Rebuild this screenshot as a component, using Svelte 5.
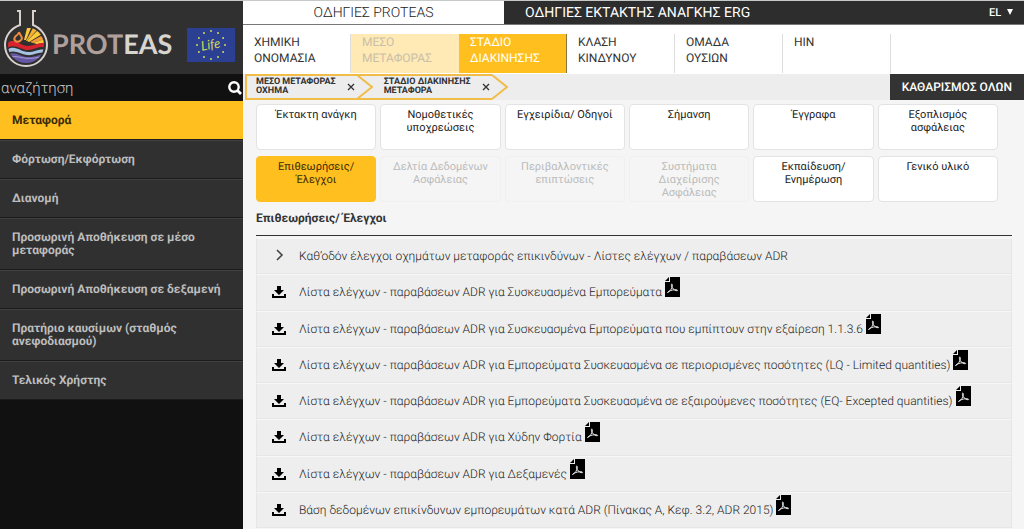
<script lang="ts">
  interface NavItem {
    label: string;
    state?: 'done' | 'active';
  }

  interface Tile {
    label: string;
    disabled?: boolean;
  }

  let search = $state('');
  let language = $state('EL');
  let activeStage = $state('Μεταφορά');
  let activeTile = $state('Επιθεωρήσεις/ Έλεγχοι');

  const stages = [
    'Μεταφορά',
    'Φόρτωση/Εκφόρτωση',
    'Διανομή',
    'Προσωρινή Αποθήκευση σε μέσο μεταφοράς',
    'Προσωρινή Αποθήκευση σε δεξαμενή',
    'Πρατήριο καυσίμων (σταθμός ανεφοδιασμού)',
    'Τελικός Χρήστης'
  ];

  const navItems: NavItem[] = [
    { label: 'ΧΗΜΙΚΗ ΟΝΟΜΑΣΙΑ' },
    { label: 'ΜΕΣΟ ΜΕΤΑΦΟΡΑΣ', state: 'done' },
    { label: 'ΣΤΑΔΙΟ ΔΙΑΚΙΝΗΣΗΣ', state: 'active' },
    { label: 'ΚΛΑΣΗ ΚΙΝΔΥΝΟΥ' },
    { label: 'ΟΜΑΔΑ ΟΥΣΙΩΝ' },
    { label: 'HIN' }
  ];

  let filters = $state([
    { name: 'ΜΕΣΟ ΜΕΤΑΦΟΡΑΣ', value: 'ΟΧΗΜΑ' },
    { name: 'ΣΤΑΔΙΟ ΔΙΑΚΙΝΗΣΗΣ', value: 'ΜΕΤΑΦΟΡΑ' }
  ]);

  const tiles: Tile[] = [
    { label: 'Έκτακτη ανάγκη' },
    { label: 'Νομοθετικές υποχρεώσεις' },
    { label: 'Εγχειρίδια/ Οδηγοί' },
    { label: 'Σήμανση' },
    { label: 'Έγγραφα' },
    { label: 'Εξοπλισμός ασφάλειας' },
    { label: 'Επιθεωρήσεις/ Έλεγχοι' },
    { label: 'Δελτία Δεδομένων Ασφάλειας', disabled: true },
    { label: 'Περιβαλλοντικές επιπτώσεις', disabled: true },
    { label: 'Συστήματα Διαχείρισης Ασφάλειας', disabled: true },
    { label: 'Εκπαίδευση/ Ενημέρωση' },
    { label: 'Γενικό υλικό' }
  ];

  const documents = [
    'Λίστα ελέγχων - παραβάσεων ADR για Συσκευασμένα Εμπορεύματα',
    'Λίστα ελέγχων - παραβάσεων ADR για Συσκευασμένα Εμπορεύματα που εμπίπτουν στην εξαίρεση 1.1.3.6',
    'Λίστα ελέγχων - παραβάσεων ADR για Εμπορεύματα Συσκευασμένα σε περιορισμένες ποσότητες (LQ - Limited quantities)',
    'Λίστα ελέγχων - παραβάσεων ADR για Εμπορεύματα Συσκευασμένα σε εξαιρούμενες ποσότητες (EQ- Excepted quantities)',
    'Λίστα ελέγχων - παραβάσεων ADR για Χύδην Φορτία',
    'Λίστα ελέγχων - παραβάσεων ADR για Δεξαμενές',
    'Βάση δεδομένων επικίνδυνων εμπορευμάτων κατά ADR (Πίνακας Α, Κεφ. 3.2, ADR 2015)'
  ];

  const stars = Array.from({ length: 12 }, (_, i) => {
    const angle = (i * Math.PI) / 6;
    return { x: 24 + 14 * Math.sin(angle), y: 17 - 14 * Math.cos(angle) };
  });

  function removeFilter(name: string) {
    filters = filters.filter((f) => f.name !== name);
  }
</script>

<div class="page">
  <aside class="sidebar">
    <a class="brand" href="#home" aria-label="PROTEAS">
      <svg class="flask" viewBox="0 0 46 60" width="46" height="60" aria-hidden="true">
        <defs>
          <clipPath id="bowl"><circle cx="23" cy="37" r="18" /></clipPath>
        </defs>
        <g clip-path="url(#bowl)">
          <path d="M21 32 24 20 28 20 23 32Z" fill="#f8c73c" />
          <path d="M23 33 30 20 34 22 24 33Z" fill="#f8b233" />
          <path d="M24 33 35 22 39 26 26 34Z" fill="#fbc93a" />
          <path d="M27 34 38 28 42 31 30 35Z" fill="#f29a38" />
          <path d="M30 35 42 31 43 35 34 36Z" fill="#fbc93a" />
          <path d="M4 35C12 29 17 38 25 38S36 33 43 36V40C35 37 32 42 25 42S12 35 4 40Z" fill="#d8232f" />
          <path d="M4 42C12 36 17 44 25 44S36 40 43 42V45C35 43 31 48 24 47S12 41 4 45Z" fill="#a7c3e2" />
          <path d="M4 47C12 42 17 49 25 49S35 47 43 45V57H4Z" fill="#6658a5" />
          <path d="M8 49C17 47 20 53 37 49" fill="none" stroke="#a99ed0" stroke-width="1" />
        </g>
        <path d="M16 24C18 29 21 30 17 33C13 35 10 32 12 29C13 27 16 27 16 24Z" fill="none" stroke="#f08a3c" stroke-width="2" />
        <path
          d="M14 3H17V17C8 20 2 28 2 37A21 21 0 0 0 44 37C44 28 38 20 30 17V3H33"
          fill="none"
          stroke="#d8d2cf"
          stroke-width="2"
        />
      </svg>
      <span class="wordmark"><span>PROT</span>EAS</span>
      <svg class="life" viewBox="0 0 48 34" width="48" height="34" aria-hidden="true">
        <rect width="48" height="34" fill="#2b3f93" />
        {#each stars as star}
          <circle cx={star.x} cy={star.y} r="1" fill="#d5d957" />
        {/each}
        <text x="14" y="21" transform="rotate(-10 24 17)">Life</text>
      </svg>
    </a>
    <form class="search" onsubmit={(e) => e.preventDefault()}>
      <input type="text" aria-label="αναζήτηση" placeholder="αναζήτηση" bind:value={search} />
      <button type="submit" aria-label="Search">
        <svg viewBox="0 0 14 14" width="14" height="14">
          <circle cx="6" cy="6" r="4.7" fill="none" stroke="#fff" stroke-width="2.4" />
          <path d="M9 9 13 13" stroke="#fff" stroke-width="2.8" />
        </svg>
      </button>
    </form>
    <nav class="stages">
      {#each stages as stage}
        <button
          type="button"
          class:active={stage === activeStage}
          onclick={() => (activeStage = stage)}
        >
          {stage}
        </button>
      {/each}
    </nav>
  </aside>

  <main>
    <header class="topbar">
      <a class="tab current" href="#proteas">ΟΔΗΓΙΕΣ PROTEAS</a>
      <a class="tab" href="#erg">ΟΔΗΓΙΕΣ ΕΚΤΑΚΤΗΣ ΑΝΑΓΚΗΣ ERG</a>
      <label class="language">
        <select aria-label="Language" bind:value={language}>
          <option>EL</option>
          <option>EN</option>
        </select>
        <svg viewBox="0 0 6 6" width="6" height="6" aria-hidden="true">
          <path d="M0 0H6L3 6Z" fill="#fff" />
        </svg>
      </label>
    </header>

    <nav class="criteria">
      {#each navItems as item}
        <a href="#criteria" class={item.state}>{item.label}</a>
      {/each}
    </nav>

    <div class="filters">
      {#each filters as filter (filter.name)}
        <div class="chip">
          <span>{filter.name}<br />{filter.value}</span>
          <button type="button" aria-label="Remove {filter.name}" onclick={() => removeFilter(filter.name)}>
            <svg viewBox="0 0 8 8" width="8" height="8">
              <path d="M1 1 7 7M7 1 1 7" stroke="#333" stroke-width="1.3" />
            </svg>
          </button>
          <svg class="point" viewBox="0 0 16 26" width="16" height="26" aria-hidden="true">
            <path d="M0 1 15 13 0 25" fill="none" stroke="#f1bd48" stroke-width="2" />
          </svg>
        </div>
      {/each}
      <button type="button" class="clear" onclick={() => (filters = [])}>ΚΑΘΑΡΙΣΜΟΣ ΟΛΩΝ</button>
    </div>

    <div class="content">
      <div class="tiles">
        {#each tiles as tile}
          <button
            type="button"
            class="tile"
            class:active={tile.label === activeTile}
            disabled={tile.disabled}
            onclick={() => (activeTile = tile.label)}
          >
            {tile.label}
          </button>
        {/each}
      </div>

      <h1>Επιθεωρήσεις/ Έλεγχοι</h1>

      <ul class="documents">
        <li>
          <a href="#group">
            <svg class="icon" viewBox="0 0 14 14" width="14" height="14" aria-hidden="true">
              <path d="M5 1 10 6 5 11" fill="none" stroke="#444" stroke-width="1.6" />
            </svg>
            <span>Καθ’οδόν έλεγχοι οχημάτων μεταφοράς επικινδύνων - Λίστες ελέγχων / παραβάσεων ADR</span>
          </a>
        </li>
        {#each documents as doc}
          <li>
            <a href="#document">
              <svg class="icon" viewBox="0 0 14 14" width="14" height="14" aria-hidden="true">
                <path d="M5 1H9V5H12L7 10 2 5H5Z" />
                <path d="M1 9V12H13V9" fill="none" stroke="#000" stroke-width="2" />
              </svg>
              <span>{doc}</span>
              <svg class="pdf" viewBox="0 0 15 20" width="15" height="20" aria-hidden="true">
                <path d="M5 0H15V20H0V5H5Z" />
                <path d="M0 4 4 0V4Z" />
                <path
                  d="M2.5 15.5C5 14.5 7.5 11 7.3 7.8C7.2 6.5 6 6.8 6.4 8.4C7 11 9 13.6 12 13.8C13.5 13.6 12 12.3 9.5 12.7C7 13 4 13.8 2.5 15.5Z"
                  fill="none"
                  stroke="#eee"
                  stroke-width="1"
                />
              </svg>
            </a>
          </li>
        {/each}
      </ul>
    </div>
  </main>
</div>

<style>
  :global(body) {
    margin: 0;
    background: #f5f5f5;
  }

  .page {
    display: grid;
    grid-template-columns: 243px 1fr;
    min-height: 100vh;
    box-sizing: border-box;
    border-top: 1px solid #c5c9c7;
    font-family: Roboto, 'Open Sans', sans-serif;
    font-size: 12px;
    color: #333;
    text-rendering: geometricPrecision;
  }

  a {
    color: inherit;
    text-decoration: none;
  }

  button,
  input,
  select {
    font-family: inherit;
    text-rendering: inherit;
    border: none;
    border-radius: 0;
    margin: 0;
    padding: 0;
    background: none;
    color: inherit;
  }

  button {
    cursor: pointer;
  }

  svg {
    display: block;
    flex-shrink: 0;
  }

  .sidebar {
    background: #111;
  }

  .brand {
    display: flex;
    align-items: center;
    height: 73px;
    padding: 0 8px 0 3px;
    background: #303030;
  }

  .wordmark {
    margin-left: 3px;
    padding-top: 12px;
    font-family: Lato, sans-serif;
    font-size: 27px;
    font-weight: 700;
    color: #d8d5cf;
  }

  .wordmark span {
    color: #b0a09d;
  }

  .life {
    margin: 14px 0 0 auto;
  }

  .life text {
    fill: #d5d957;
    font-family: Lato, sans-serif;
    font-style: italic;
    font-size: 13px;
  }

  .search {
    display: flex;
    align-items: center;
    height: 27px;
    padding-right: 1px;
  }

  .search input {
    flex: 1;
    min-width: 0;
    padding-left: 1px;
    font-size: 15px;
    font-weight: 300;
    color: #ccc;
    outline: none;
  }

  .search input::placeholder {
    color: #c8c8c8;
    opacity: 1;
  }

  .stages {
    display: flex;
    flex-direction: column;
  }

  .stages button {
    box-sizing: border-box;
    padding: 12px;
    border-top: 1px solid #414141;
    border-bottom: 1px solid #1b1b1b;
    background: #303030;
    color: #bdbdbd;
    font-size: 12px;
    font-weight: 700;
    line-height: 13px;
    text-align: left;
  }

  .stages .active {
    border-top-color: #ffbf1f;
    background: #ffbf1f;
    color: #3a2b06;
  }

  main {
    display: flex;
    flex-direction: column;
    min-width: 0;
    background: #f5f5f5;
  }

  .topbar {
    display: flex;
    align-items: center;
    height: 23px;
    border-bottom: 1px solid #777;
    background: #2d2d2d;
    color: #fff;
  }

  .tab {
    padding: 1px 0 0 21px;
    font-size: 14px;
    line-height: 22px;
  }

  .tab.current {
    width: 261px;
    padding-left: 0;
    background: #fff;
    color: #222;
    font-weight: 300;
    text-align: center;
  }

  .language {
    display: flex;
    align-items: center;
    gap: 3px;
    margin-left: auto;
    padding-right: 11px;
  }

  .language svg {
    margin-bottom: 2px;
  }

  .language select {
    appearance: none;
    font-size: 11px;
    font-weight: 500;
  }

  .language option {
    color: #333;
  }

  .criteria {
    display: flex;
    padding: 9px 0 1px;
    background: #fff;
  }

  .criteria a {
    box-sizing: border-box;
    width: 14%;
    max-width: 108px;
    height: 39px;
    padding: 0 11px;
    border-right: 1px solid #ddd;
    font-size: 12px;
    line-height: 16px;
  }

  .criteria .done {
    border-color: #ffe9b5;
    background: #ffe9b5;
    color: #c9bfa9;
  }

  .criteria .active {
    border-color: #8a7440;
    background: #ffbf1f;
    color: #fff;
  }

  .filters {
    display: flex;
    height: 26px;
    padding-left: 2px;
    background: #ededed;
  }

  .chip {
    display: flex;
    align-items: center;
    box-sizing: border-box;
    height: 26px;
    padding-left: 27px;
    border: solid #f1bd48;
    border-width: 2px 0;
    font-size: 9px;
    font-weight: 700;
    line-height: 9px;
  }

  .chip:first-child {
    padding-left: 9px;
    border-left-width: 2px;
  }

  .chip button {
    margin: 0 2px 0 11px;
  }

  .chip .point {
    margin-right: -16px;
  }

  .clear {
    margin-left: auto;
    padding: 0 12px;
    background: #333;
    color: #fff;
    font-size: 12px;
    font-weight: 500;
  }

  .content {
    display: flex;
    flex: 1;
    flex-direction: column;
    padding: 4px 12px 1px 13px;
  }

  .tiles {
    display: grid;
    grid-template-columns: repeat(6, 1fr);
    gap: 6px 4px;
    padding-right: 14px;
  }

  .tile {
    display: flex;
    justify-content: center;
    box-sizing: border-box;
    min-height: 46px;
    padding: 3px 10px 2px;
    border: 1px solid #e3e3e3;
    border-radius: 4px;
    background: #fff;
    color: #222;
    font-size: 11px;
    line-height: 13px;
  }

  .tile:disabled {
    border-color: #f0f0f0;
    background: #f5f5f5;
    color: #bbb;
  }

  .tile.active {
    border-color: #ffbf1f;
    background: #ffbf1f;
    color: #3a2b06;
  }

  h1 {
    margin: 8px 0 0;
    padding-bottom: 9px;
    border-bottom: 1px solid #333;
    font-size: 12px;
    font-weight: 700;
    line-height: 16px;
  }

  .documents {
    display: grid;
    flex: 1;
    grid-auto-rows: minmax(36px, 1fr);
    margin: 2px 0 0;
    padding: 0;
    list-style: none;
  }

  .documents li {
    display: flex;
    border: 1px solid #e6e6e6;
    border-top-color: #f7f7f7;
    background: #eee;
  }

  .documents a {
    display: flex;
    flex: 1;
    align-items: center;
    padding-left: 15px;
    color: #222;
    font-weight: 300;
  }

  .icon {
    margin-right: 13px;
  }

  .pdf {
    margin: 0 0 10px 3px;
  }
</style>
